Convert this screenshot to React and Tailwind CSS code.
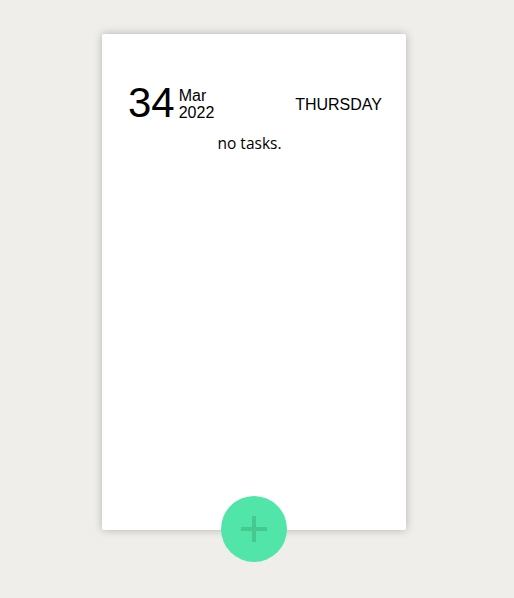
const App = () => {
    return (
        <main className="min-h-[598px] bg-[#efeeea] pt-[34px] pl-[102px] font-['Liberation_Sans',Arial,sans-serif]">
            <section className="relative h-[496px] w-[304px] rounded-[2px] bg-white shadow-[0_0_8px_rgba(0,0,0,0.25)]">
                <div className="flex items-center justify-between pl-[26px] pr-[24px] pt-[48px]">
                    <div className="flex items-center gap-[4px]">
                        <span className="text-[42px] leading-none text-black">34</span>
                        <div className="flex flex-col pt-[2px] text-[16px] leading-[17px] text-black">
                            <span>Mar</span>
                            <span>2022</span>
                        </div>
                    </div>
                    <span className="pt-[4px] text-[16px] text-black">THURSDAY</span>
                </div>
                <p className="mt-[8px] pr-[9px] text-center font-['Open_Sans',sans-serif] text-[15.5px] text-black">
                    no tasks.
                </p>
                <button className="absolute bottom-[-32px] left-[119px] flex h-[66px] w-[66px] items-center justify-center rounded-full bg-[#52e5a9]">
                    <svg width="28" height="28" viewBox="0 0 28 28">
                        <path d="M14 1v26M1 14h26" stroke="#45c98f" strokeWidth="4" />
                    </svg>
                </button>
            </section>
        </main>
    );
};

export default App;
